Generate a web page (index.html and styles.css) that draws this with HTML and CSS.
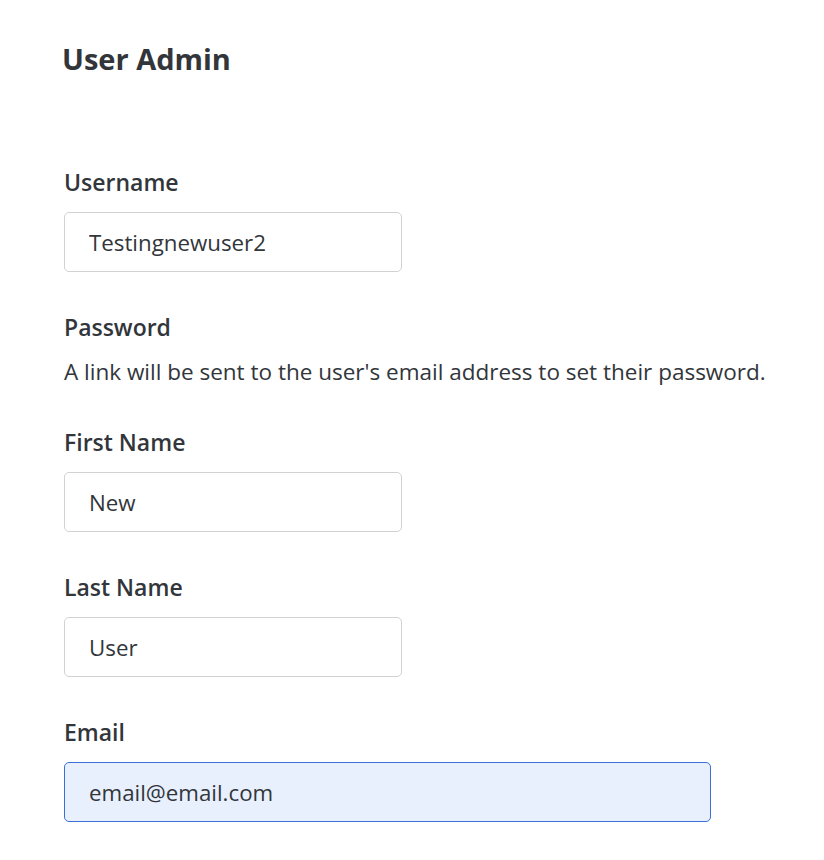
FILE: index.html
```html
<!DOCTYPE html>
<html lang="en">
<head>
    <meta charset="UTF-8">
    <meta name="viewport" content="width=device-width, initial-scale=1.0">
    <title>User Admin</title>
    <link rel="stylesheet" href="styles.css">
</head>
<body>
    <main class="page">
        <h1 class="title">User Admin</h1>
        <form class="user-form">
            <div class="field">
                <label for="username">Username</label>
                <input type="text" id="username" class="short" value="Testingnewuser2">
            </div>
            <div class="field">
                <label>Password</label>
                <p class="help">A link will be sent to the user's email address to set their password.</p>
            </div>
            <div class="field">
                <label for="first_name">First Name</label>
                <input type="text" id="first_name" class="short" value="New">
            </div>
            <div class="field">
                <label for="last_name">Last Name</label>
                <input type="text" id="last_name" class="short" value="User">
            </div>
            <div class="field">
                <label for="email">Email</label>
                <input type="email" id="email" class="long autofilled" value="email@email.com">
            </div>
        </form>
    </main>
</body>
</html>
```

FILE: styles.css
```css
:root {
    --text-color: #32363b;
    --border-color: #d2d2d2;
}
body {
    margin: 0;
    font-family: "Open Sans", sans-serif;
    color: var(--text-color);
    background: #fff;
}
.page {
    padding: 41px 0 0 64px;
}
.title {
    margin: 0 0 0 -2px;
    font-size: 29px;
    line-height: 36px;
    font-weight: 700;
}
.user-form {
    margin-top: 90px;
    display: flex;
    flex-direction: column;
    gap: 40px;
}
.field {
    display: flex;
    flex-direction: column;
    align-items: flex-start;
}
label {
    font-size: 23px;
    line-height: 30px;
    font-weight: 600;
    margin-bottom: 15px;
}
.help {
    margin: 0;
    font-size: 22.5px;
    line-height: 30px;
}
input {
    box-sizing: border-box;
    height: 60px;
    padding: 0 24px;
    font-family: inherit;
    font-size: 22.3px;
    color: var(--text-color);
    border: 1px solid var(--border-color);
    border-radius: 5px;
    background: #fff;
    outline: none;
}
.short {
    width: 338px;
}
.long {
    width: 647px;
}
.autofilled {
    background: #e8f0fe;
    border-color: #3a6fd6;
}
```
